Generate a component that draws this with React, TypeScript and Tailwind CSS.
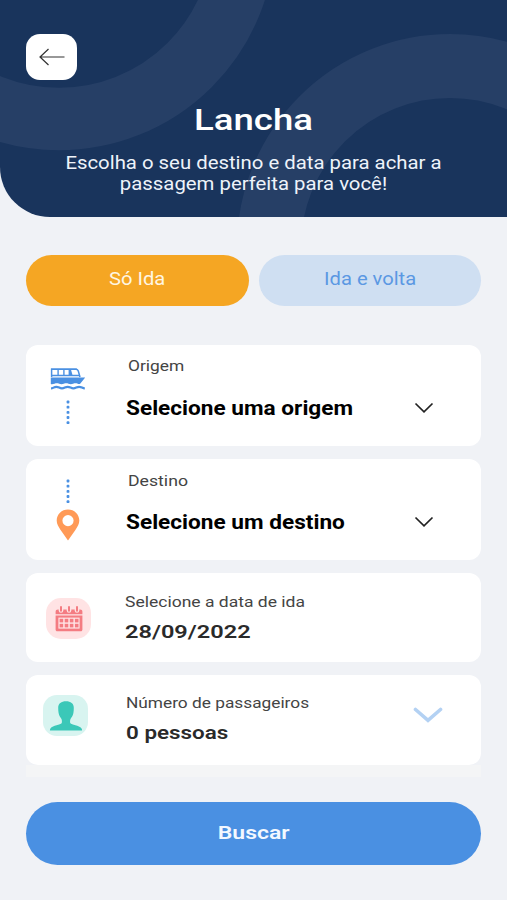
import { useState, type ReactNode } from 'react';

type Trip = 'one-way' | 'round';

const TRIPS: { id: Trip; label: string }[] = [
  { id: 'one-way', label: 'Só Ida' },
  { id: 'round', label: 'Ida e volta' },
];

function BoatIcon() {
  return (
    <svg width="36" height="24" viewBox="0 0 36 24" fill="none">
      <path d="M1.6 10V2.2h24.2c1.2 0 2 .6 2.4 1.6L30 10" stroke="#4a90e2" strokeWidth="1.5" />
      <path d="M1 1.5h26v1.6H1zM7.4 2h1.4v7H7.4zM13.2 2h1.4v7h-1.4zM18.6 2h2.2l2 7h-4.2zM1 7.8h29v1.4H1z" fill="#4a90e2" />
      <path
        d="M.8 10.6h34.4l-4.6 5.600c-.8.9-1.600 1-2.800.6-1.700-.6-3-.6-4.700 0-1.600.5-3 .5-4.600 0-1.700-.6-3-.6-4.700 0-1.600.5-3 .5-4.600 0-1.700-.6-3-.6-4.700 0-1.700.5-3 .5-3.700.2z"
        fill="#4a90e2"
      />
      <path d="M1 21.400c2.300 0 2.800-1.600 5.300-1.600s3.200 1.600 5.700 1.600 3.200-1.600 5.700-1.600 3.200 1.600 5.700 1.600 3.200-1.600 5.700-1.600 3.200 1.600 5.700 1.600" stroke="#4a90e2" strokeWidth="2.200" />
    </svg>
  );
}

function PinIcon() {
  return (
    <svg width="24" height="32" viewBox="0 0 24 32">
      <path
        fillRule="evenodd"
        d="M12 .5C5.7.5.7 5.3.7 11.5c0 3.5 1.7 6.200 3.900 9.500L12 31.500 19.400 21c2.200-3.300 3.900-6 3.900-9.500C23.300 5.300 18.300.5 12 .5zm0 5.500a5.600 5.600 0 1 1 0 11.200A5.600 5.600 0 0 1 12 6z"
        fill="#ff9a57"
      />
    </svg>
  );
}

function CalendarIcon() {
  return (
    <svg width="28" height="26" viewBox="0 0 28 26">
      <path d="M.6 8.200V5.800c0-1.400.9-2.300 2.400-2.300h22c1.500 0 2.400.9 2.400 2.300v2.400z" fill="#f47c82" />
      <path d="M.6 9.400h26.800v14.400c0 .9-.7 1.500-1.600 1.500H2.200c-.9 0-1.600-.6-1.600-1.500z" fill="#f47c82" />
      <g fill="#ffe3e4">
        {[6, 14, 22].map((x) => (
          <rect key={x} x={x - 2.3} y="0" width="4.6" height="6.8" rx="2.3" />
        ))}
        <rect x="3.4" y="11.6" width="21.2" height="11" />
      </g>
      <g fill="#f47c82">
        {[6, 14, 22].map((x) => (
          <rect key={x} x={x - 1} y="0" width="2" height="5.8" rx="1" />
        ))}
        {[4.6, 9.7, 14.8, 19.9].map((x) => (
          <g key={x}>
            <rect x={x} y="12.8" width="3.6" height="3.6" />
            <rect x={x} y="17.8" width="3.6" height="3.6" />
          </g>
        ))}
      </g>
    </svg>
  );
}

function PersonIcon() {
  return (
    <svg width="34" height="30" viewBox="0 0 34 30">
      <path
        d="M17 .3c4.700 0 7.800 2.300 7.800 6.500 0 2-.1 3.600-.4 5.200-.5 2.900-1.900 4.400-2.900 6-.5 1-.6 3.400-.1 4.300.9 1.600 8.900 2.200 11 4.900.5.700.7 1.400.7 2.300H.9c0-.9.2-1.600.7-2.300 2.100-2.700 10.100-3.300 11-4.900.5-.9.4-3.300-.1-4.300-1-1.600-2.400-3.100-2.900-6-.3-1.600-.4-3.200-.4-5.200C9.200 2.600 12.300.3 17 .3z"
        fill="#3bc8b8"
      />
    </svg>
  );
}

function Dots() {
  return (
    <svg width="4" height="25" viewBox="0 0 4 25" fill="#4a90e2">
      {[0.6, 5.8, 11, 16.1, 21.3].map((y) => (
        <rect key={y} x=".6" y={y} width="2.8" height="2.8" rx=".9" />
      ))}
    </svg>
  );
}

function Chevron() {
  return (
    <svg width="20" height="12" viewBox="0 0 20 12" fill="none">
      <path d="M1.500 1.500 10 9.800l8.500-8.300" stroke="#222" strokeWidth="1.700" />
    </svg>
  );
}

function Card({ className, children }: { className: string; children: ReactNode }) {
  return <button className={`flex w-full rounded-xl bg-white text-left ${className}`}>{children}</button>;
}

export default function App() {
  const [trip, setTrip] = useState<Trip>('one-way');

  return (
    <div className="h-[900px] w-[507px] overflow-hidden bg-[#f0f2f6] font-['Roboto',sans-serif]">
      <header className="relative h-[217px] overflow-hidden rounded-bl-[50px] bg-[#19345c] text-center text-white">
        <svg className="absolute inset-0" width="507" height="217" fill="none" stroke="#263f66">
          <circle cx="59" cy="-66" r="185" strokeWidth="62.5" />
          <circle cx="450" cy="247" r="181" strokeWidth="64" />
        </svg>
        <div className="relative flex flex-col px-[26px] pt-[34px]">
          <button className="flex h-[46px] w-[51px] items-center justify-center rounded-[14px] bg-white">
            <svg width="26" height="18" viewBox="0 0 26 18" fill="none" stroke="#333" strokeWidth="1.2">
              <path d="M25.500 9H1M9.500 1 1 9l8.500 8" />
            </svg>
          </button>
          <h1 className="mt-[22px] scale-x-[1.22] text-[30px] leading-9 font-medium">Lancha</h1>
          <p className="mt-[14px] scale-x-[1.13] text-[18px] leading-[21px] whitespace-nowrap text-[#eef3fa]">
            Escolha o seu destino e data para achar a<br />passagem perfeita para você!
          </p>
        </div>
      </header>

      <main className="px-[26px] pt-[38px]">
        <div className="flex gap-[10px] text-[18px]">
          {TRIPS.map(({ id, label }) => (
            <button
              key={id}
              onClick={() => setTrip(id)}
              className={`h-[51px] w-[223px] rounded-full pb-[5px] ${trip === id ? 'bg-[#f5a623] text-[#fff6e2]' : 'bg-[#cfdff2] text-[#5b98e3]'}`}
            >
              <span className="inline-block scale-x-[1.12]">{label}</span>
            </button>
          ))}
        </div>

        <div className="mt-[39px] flex flex-col">
          <Card className="h-[101px] pr-[47px] pl-[24px]">
            <div className="flex w-[36px] flex-col items-center pt-[22px]">
              <BoatIcon />
              <div className="mt-[9px]"><Dots /></div>
            </div>
            <div className="ml-[40px] flex flex-col items-start whitespace-nowrap">
              <span className="mt-[11px] ml-[2px] origin-left scale-x-[1.12] text-[15.5px] leading-5 text-[#444]">Origem</span>
              <span className="mt-[18px] origin-left scale-x-[1.103] text-[20.5px] leading-7 font-bold text-black">Selecione uma origem</span>
            </div>
            <div className="ml-auto pt-[57px]"><Chevron /></div>
          </Card>

          <Card className="mt-[13px] h-[101px] pr-[47px] pl-[24px]">
            <div className="flex w-[36px] flex-col items-center pt-[20px]">
              <Dots />
              <div className="mt-[5px]"><PinIcon /></div>
            </div>
            <div className="ml-[40px] flex flex-col items-start whitespace-nowrap">
              <span className="mt-[12px] ml-[2px] origin-left scale-x-[1.14] text-[15.5px] leading-5 text-[#444]">Destino</span>
              <span className="mt-[17px] origin-left scale-x-[1.103] text-[20.5px] leading-7 font-bold text-black">Selecione um destino</span>
            </div>
            <div className="ml-auto pt-[57px]"><Chevron /></div>
          </Card>

          <Card className="mt-[13px] h-[89px] pl-[20px]">
            <div className="mt-[25px] flex h-[41px] w-[45px] items-center justify-center rounded-[15px] bg-[#ffe3e4]">
              <CalendarIcon />
            </div>
            <div className="ml-[34px] flex flex-col items-start whitespace-nowrap">
              <span className="mt-[19px] origin-left scale-x-[1.13] text-[15.5px] leading-5 text-[#444]">Selecione a data de ida</span>
              <span className="mt-[8px] origin-left scale-x-[1.24] text-[19px] leading-6 font-semibold text-[#2a2a2a]">28/09/2022</span>
            </div>
          </Card>

          <Card className="mt-[13px] h-[90px] pr-[38px] pl-[17px]">
            <div className="mt-[20px] flex h-[41px] w-[45px] items-center justify-center rounded-[14px] bg-[#d8f4f0]">
              <PersonIcon />
            </div>
            <div className="ml-[38px] flex flex-col items-start whitespace-nowrap">
              <span className="mt-[18px] origin-left scale-x-[1.115] text-[15.5px] leading-5 text-[#444]">Número de passageiros</span>
              <span className="mt-[8px] origin-left scale-x-[1.18] text-[19px] leading-6 font-semibold text-[#2a2a2a]">0 pessoas</span>
            </div>
            <svg width="30" height="17" viewBox="0 0 30 17" fill="none" className="mt-[32px] ml-auto">
              <path d="M2.500 2.500 15 13.300 27.500 2.500" stroke="#b3d1f3" strokeWidth="3.600" strokeLinecap="round" />
            </svg>
          </Card>
          <div className="h-[12px] bg-[#f4f5f6]" />
        </div>

        <button className="mt-[25px] h-[63px] w-full rounded-full bg-[#4a90e2] text-[19px] font-semibold text-[#f3f8ff]">
          <span className="inline-block scale-x-[1.21]">Buscar</span>
        </button>
      </main>
    </div>
  );
}
